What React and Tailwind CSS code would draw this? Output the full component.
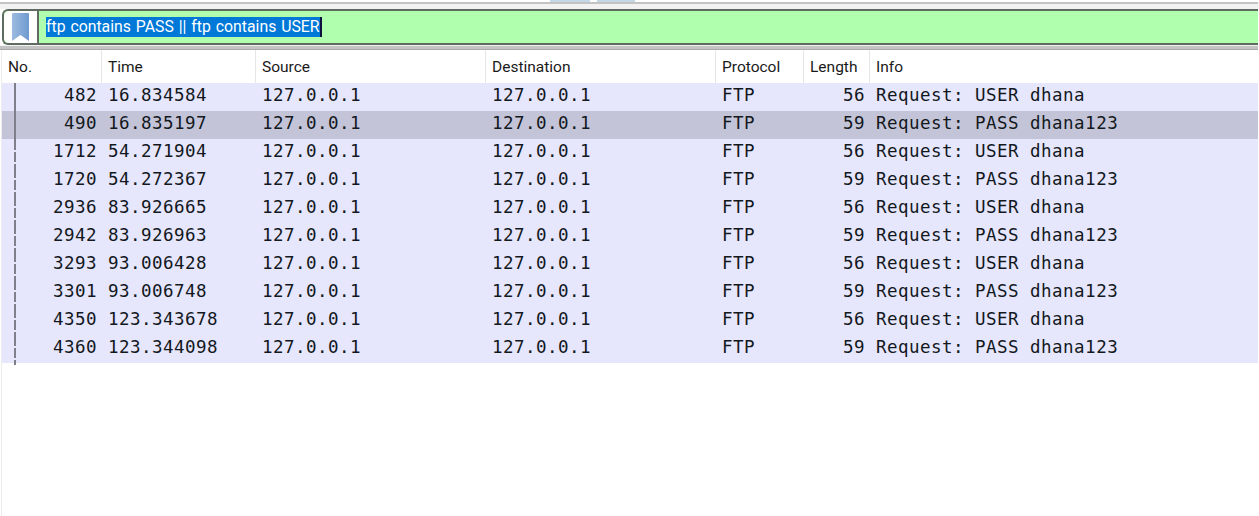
const cols = ["w-[100px]", "w-[154px]", "w-[230px]", "w-[230px]", "w-[88px]", "w-[66px]", "flex-1"];
const heads = ["No.", "Time", "Source", "Destination", "Protocol", "Length", "Info"];
const rows = [
  ["482", "16.834584", "56", "USER dhana"],
  ["490", "16.835197", "59", "PASS dhana123"],
  ["1712", "54.271904", "56", "USER dhana"],
  ["1720", "54.272367", "59", "PASS dhana123"],
  ["2936", "83.926665", "56", "USER dhana"],
  ["2942", "83.926963", "59", "PASS dhana123"],
  ["3293", "93.006428", "56", "USER dhana"],
  ["3301", "93.006748", "59", "PASS dhana123"],
  ["4350", "123.343678", "56", "USER dhana"],
  ["4360", "123.344098", "59", "PASS dhana123"],
];

function Bookmark() {
  return (
    <svg width="17" height="28" viewBox="0 0 17 28" className="block">
      <defs>
        <linearGradient id="bm" x1="0" y1="0" x2="1" y2="0">
          <stop offset="0" stopColor="#9dbbe0" />
          <stop offset="1" stopColor="#6f9ad0" />
        </linearGradient>
      </defs>
      <path d="M1 0H16Q17 0 17 1V28L8.5 22L0 28V1Q0 0 1 0Z" fill="url(#bm)" />
    </svg>
  );
}

function Row({ r, selected }) {
  return (
    <div className={`flex h-[28px] items-center whitespace-pre pb-[4px] font-['DejaVu_Sans_Mono',monospace] text-[17.5px] tracking-[0.47px] text-[#12181c] ${selected ? "bg-[#c4c4d9]" : "bg-[#e6e6fd]"}`}>
      <div className={`${cols[0]} pr-[5px] text-right`}>{r[0]}</div>
      <div className={`${cols[1]} pl-[6px]`}>{r[1]}</div>
      <div className={`${cols[2]} pl-[6px]`}>127.0.0.1</div>
      <div className={`${cols[3]} pl-[6px]`}>127.0.0.1</div>
      <div className={`${cols[4]} pl-[6px]`}>FTP</div>
      <div className={`${cols[5]} pr-[5px] text-right`}>{r[2]}</div>
      <div className={`${cols[6]} pl-[6px]`}>Request: {r[3]}</div>
    </div>
  );
}

export default function App() {
  return (
    <div className="h-[516px] w-[1259px] overflow-hidden bg-white font-['Roboto',sans-serif]">
      <div className="flex h-[2px] justify-start bg-white pl-[550px]">
        <div className="h-full w-[40px] bg-[#c4d8e6]" />
        <div className="ml-[7px] h-full w-[38px] bg-[#c4d8e6]" />
      </div>
      <div className="mr-px h-[2px] bg-[#c3c3c3]" />
      <div className="h-[5px] bg-[#f2f2f2]" />
      <div className="mr-px ml-[2px] flex h-[36px] rounded-l-[6px] border-y-2 border-l-2 border-[#5f6b60] bg-[#afffaf]">
        <div className="flex w-[35px] shrink-0 justify-center rounded-l-[5px] border-r-2 border-[#5f6b60] bg-white pt-[2px]">
          <Bookmark />
        </div>
        <div className="flex items-center pl-[7px]">
          <span className="bg-[#0078d7] text-[15.8px] leading-[20px] text-white [word-spacing:1px]">ftp contains PASS || ftp contains USER</span>
          <span className="h-[20px] w-[2px] bg-[#10103f]" />
        </div>
      </div>
      <div className="h-px bg-[#f2f2f2]" />
      <div className="mr-px h-[3px] bg-[#c3c3c3]" />
      <div className="mr-px h-px bg-[#a9a9a9]" />
      <div className="relative mr-px ml-px h-[466px] border-l border-[#ececec]">
        <div className="flex h-[33px] bg-white text-[15.5px] text-[#1a1a1a]">
          {heads.map((h, i) => (
            <div key={h} className={`${cols[i]} flex items-center pt-[2px] pl-[6px] ${i < 6 ? "border-r border-[#e6e6e6]" : ""}`}>{h}</div>
          ))}
        </div>
        {rows.map((r, i) => <Row key={r[0]} r={r} selected={i === 1} />)}
        <div className="absolute top-[33px] left-[12px] h-[67px] w-[2px] bg-[#7f7f8c]" />
        <div className="absolute top-[89px] left-[12px] h-[226px] w-[2px] bg-[repeating-linear-gradient(to_bottom,#7f7f8c_0,#7f7f8c_11px,transparent_11px,transparent_13px,#7f7f8c_13px,#7f7f8c_23px,transparent_23px,transparent_25px,#7f7f8c_25px,#7f7f8c_28px)]" />
      </div>
    </div>
  );
}
